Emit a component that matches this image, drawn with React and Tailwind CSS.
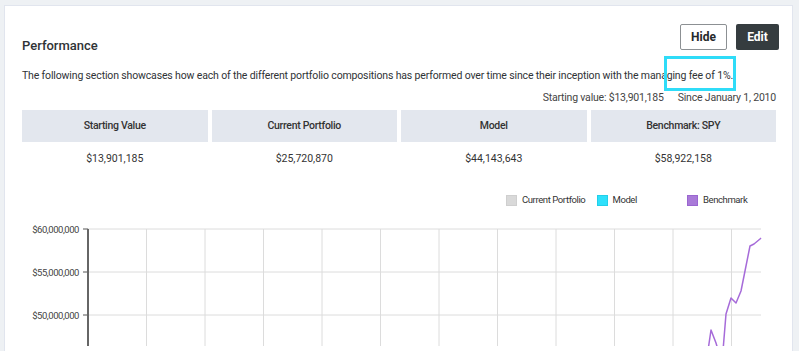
import React from 'react';

const summary = [
  { label: 'Starting Value', value: '$13,901,185' },
  { label: 'Current Portfolio', value: '$25,720,870' },
  { label: 'Model', value: '$44,143,643' },
  { label: 'Benchmark: SPY', value: '$58,922,158' },
];

const legend = [
  { label: 'Current Portfolio', swatch: 'bg-[#d9d9d9] border-[#cfcfcf]' },
  { label: 'Model', swatch: 'bg-[#2ee0fb] border-[#22cfe9]' },
  { label: 'Benchmark', swatch: 'bg-[#a97ad8] border-[#9a66d0]' },
];

// chart coordinates are relative to the svg (page x - 5, page y - 210)
const yTicks = [
  { label: '$60,000,000', y: 18 },
  { label: '$55,000,000', y: 61 },
  { label: '$50,000,000', y: 104 },
];

const vLines = Array.from({ length: 11 }, (_, i) => 83 + 58.5 * (i + 1));

const benchmark = [
  [700, 160], [706, 119], [711, 132], [717, 152], [721, 103], [726, 87],
  [731, 92], [736, 80], [740, 60], [745, 35], [749, 33], [755, 28], [756, 27],
];

function Chart() {
  return (
    <svg width="787" height="135" className="block" style={{ fontFamily: 'Roboto, sans-serif' }}>
      {yTicks.map((t) => (
        <g key={t.label}>
          <line x1="83" x2="756" y1={t.y} y2={t.y} stroke="#dcdcdc" strokeWidth="1" />
          <line x1="78" x2="83" y1={t.y} y2={t.y} stroke="#555" strokeWidth="1" />
          <text x="74" y={t.y + 3.5} fontSize="9.5" letterSpacing="-0.45" fill="#444" textAnchor="end">
            {t.label}
          </text>
        </g>
      ))}
      {vLines.map((x) => (
        <line key={x} x1={x} x2={x} y1="18" y2="141" stroke="#dcdcdc" strokeWidth="1" />
      ))}
      <line x1="83" x2="83" y1="18" y2="141" stroke="#666" strokeWidth="2" />
      <polyline
        points={benchmark.map((p) => p.join(',')).join(' ')}
        fill="none"
        stroke="#a66bd9"
        strokeWidth="1.5"
        strokeLinejoin="round"
      />
    </svg>
  );
}

export default function App() {
  return (
    <div
      className="h-[351px] overflow-hidden bg-[#eef1f4] pt-[5px] pl-[4px]"
      style={{ fontFamily: 'Roboto, "Liberation Sans", sans-serif' }}
    >
      <div className="w-[789px] min-h-[400px] bg-white border border-[#e1e5ee] text-[#333]">
        {/* Header */}
        <div className="flex items-start justify-between pl-[17px] pr-[13px] pt-[18px]">
          <h2 className="mt-[14px] text-[13px] font-medium leading-[16px] text-[#2f3336]">Performance</h2>
          <div className="flex gap-[9px]">
            <button className="h-[26px] w-[47px] rounded-[2px] border border-[#8c9093] bg-white text-[12px] font-bold text-[#25292b]">
              Hide
            </button>
            <button className="h-[26px] w-[43px] rounded-[2px] bg-[#353c3f] text-[12px] font-bold text-white">
              Edit
            </button>
          </div>
        </div>

        {/* Description */}
        <div className="relative pl-[17px] pt-[15px]">
          <p className="text-[10.5px] leading-[14px] tracking-[-0.15px] text-[#2f3336]">
            The following section showcases how each of the different portfolio compositions has performed over time since their inception with the managing fee of 1%.
          </p>
          <div className="absolute left-[659px] top-[2px] h-[35px] w-[72px] border-[3px] border-[#2fdcf8]" />
        </div>
        <div className="flex justify-end gap-[14px] pr-[16px] pt-[8px] text-[10.5px] leading-[14px] tracking-[-0.2px] text-[#444]">
          <span>Starting value: $13,901,185</span>
          <span>Since January 1, 2010</span>
        </div>

        {/* Summary table */}
        <div className="grid grid-cols-4 gap-[4px] pl-[17px] pr-[16px] pt-[5px]">
          {summary.map((s) => (
            <div key={s.label} className="flex flex-col">
              <div className="flex h-[32px] items-center justify-center bg-[#e3e7ee] text-[10.5px] font-medium tracking-[-0.3px] text-[#333]">
                {s.label}
              </div>
              <div className="flex h-[33px] items-center justify-center pt-[1px] text-[10.5px] text-[#333]">
                {s.value}
              </div>
            </div>
          ))}
        </div>

        {/* Legend */}
        <div className="flex pl-[501px] pt-[19px] text-[9.5px] leading-[12px] tracking-[-0.4px] text-[#333]">
          {legend.map((l) => (
            <div key={l.label} className="flex w-[90.5px] items-center gap-[5px]">
              <span className={`h-[11px] w-[11px] border ${l.swatch}`} />
              <span>{l.label}</span>
            </div>
          ))}
        </div>

        {/* Chart */}
        <div className="pt-[5px]">
          <Chart />
        </div>
      </div>
    </div>
  );
}
